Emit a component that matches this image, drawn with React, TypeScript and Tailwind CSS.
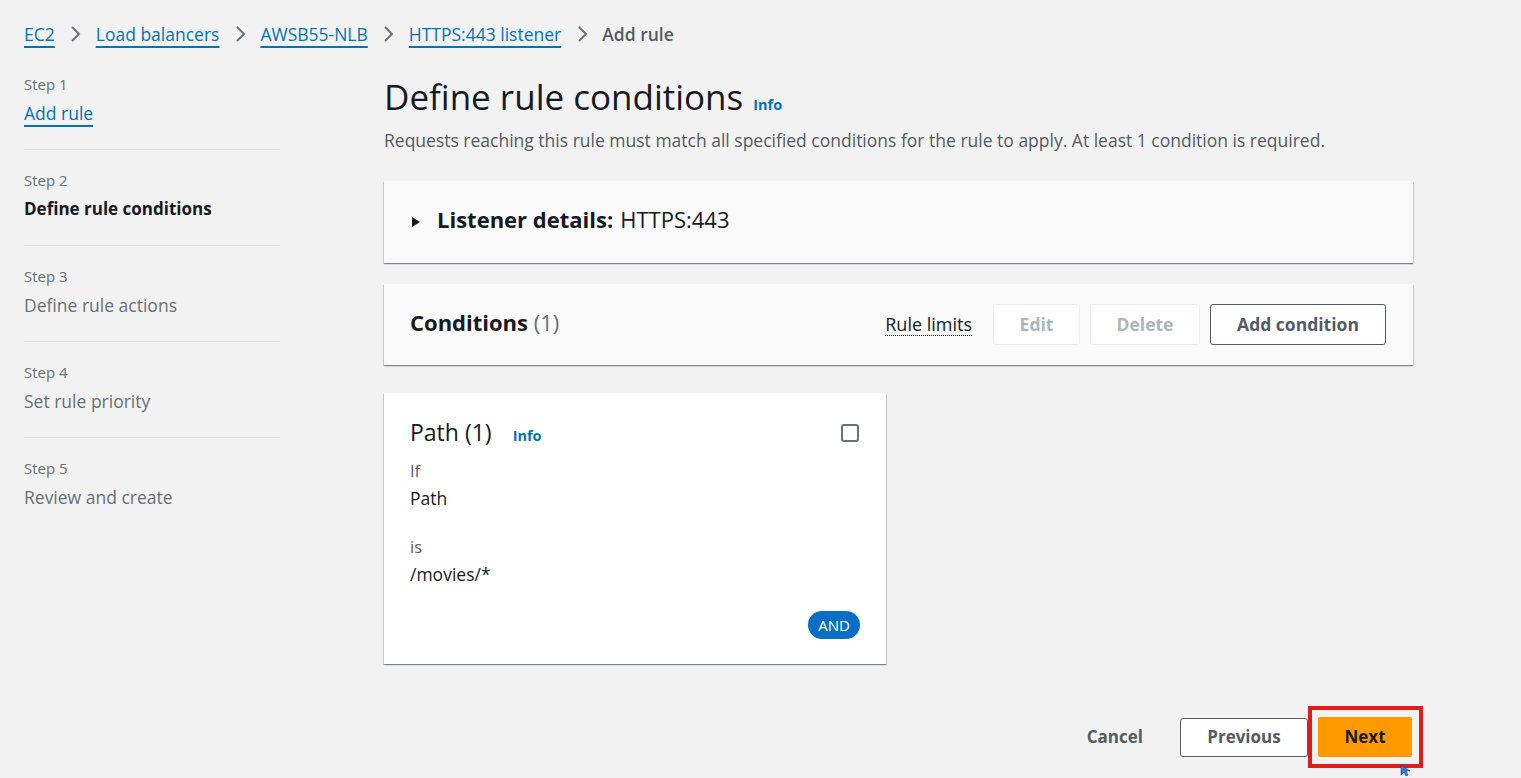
import React from 'react';

const font = { fontFamily: '"Open Sans", "Noto Sans", sans-serif' };

const crumbs = ['EC2', 'Load balancers', 'AWSB55-NLB', 'HTTPS:443 listener'];

const steps = [
  { n: 1, title: 'Add rule', state: 'link' },
  { n: 2, title: 'Define rule conditions', state: 'active' },
  { n: 3, title: 'Define rule actions', state: 'todo' },
  { n: 4, title: 'Set rule priority', state: 'todo' },
  { n: 5, title: 'Review and create', state: 'todo' },
];

function Chevron() {
  return (
    <svg width="12" height="18" viewBox="0 0 12 18" className="mx-[14.5px]">
      <path d="M3 2l7 7-7 7" fill="none" stroke="#687078" strokeWidth="2" />
    </svg>
  );
}

const cardShadow =
  'shadow-[0_1px_1px_0_rgba(0,28,36,0.35),1px_1px_1px_0_rgba(0,28,36,0.12),-1px_1px_1px_0_rgba(0,28,36,0.12)]';

export default function App() {
  return (
    <div className="min-h-screen w-full bg-[#f2f2f2] pt-[22px] text-[#16191f]" style={font}>
      {/* breadcrumb */}
      <nav className="flex h-[24px] items-center pl-[24px] text-[17.5px]">
        {crumbs.map((c) => (
          <React.Fragment key={c}>
            <a className="text-[#0073bb] underline decoration-[1.5px] underline-offset-[5px]">{c}</a>
            <Chevron />
          </React.Fragment>
        ))}
        <span className="font-semibold text-[#545b64]">Add rule</span>
      </nav>

      <div className="mt-[26px] flex">
        {/* steps */}
        <aside className="ml-[24px] w-[256px]">
          {steps.map((s, i) => (
            <div
              key={s.n}
              className={`${i > 0 ? 'border-t border-[#dcdddd] pt-[19px]' : 'pt-[1px]'} pb-[23px]`}
            >
              <div className="h-[22px] text-[15px] leading-[22px] text-[#687078]">Step {s.n}</div>
              <div
                className={`mt-[5px] h-[26px] leading-[26px] ${
                  s.state === 'link'
                    ? 'text-[17.5px] text-[#0073bb] underline decoration-[1.5px] underline-offset-[5px]'
                    : s.state === 'active'
                    ? 'text-[17px] font-bold text-[#16191f]'
                    : 'text-[17.5px] text-[#687078]'
                }`}
              >
                {s.title}
              </div>
            </div>
          ))}
        </aside>

        {/* main */}
        <main className="ml-[104px] w-[1029px]">
          <div className="mt-[5px] flex items-baseline">
            <h1 className="text-[35px] leading-[40px] font-normal">Define rule conditions</h1>
            <span className="ml-[10px] text-[14.5px] font-bold text-[#0073bb]">Info</span>
          </div>
          <p className="mt-[12px] text-[17.5px] leading-[22px] text-[#545b64]">
            Requests reaching this rule must match all specified conditions for the rule to apply. At least 1
            condition is required.
          </p>

          <section className={`mt-[30px] flex h-[82px] items-center bg-[#fafafa] pl-[27px] ${cardShadow}`}>
            <svg width="10" height="12" viewBox="0 0 10 12" className="mr-[16px]">
              <path d="M1 1l8 5-8 5z" fill="#16191f" />
            </svg>
            <div className="-mt-[6px]">
              <span className="text-[22px] font-bold">Listener details:</span>
              <span className="ml-[7px] text-[22px]">HTTPS:443</span>
            </div>
          </section>

          <section
            className={`mt-[21px] flex h-[81px] items-center justify-between bg-[#fafafa] pl-[26px] pr-[27px] ${cardShadow}`}
          >
            <div className="-mt-[4px] text-[22px]">
              <span className="font-bold">Conditions</span>{' '}
              <span className="text-[#687078]">(1)</span>
            </div>
            <div className="flex items-center">
              <span className="mr-[21px] border-b border-dotted border-[#16191f] text-[18px] leading-[22px]">
                Rule limits
              </span>
              <button className="h-[41px] w-[87px] rounded-[3px] border border-[#eaeded] bg-white text-[17.5px] font-bold text-[#aab7b8]">
                Edit
              </button>
              <button className="ml-[10px] h-[41px] w-[110px] rounded-[3px] border border-[#eaeded] bg-white text-[17.5px] font-bold text-[#aab7b8]">
                Delete
              </button>
              <button className="ml-[10px] h-[41px] w-[176px] rounded-[3px] border border-[#545b64] bg-white text-[17.5px] font-bold text-[#545b64]">
                Add condition
              </button>
            </div>
          </section>

          <section className={`mt-[28px] flex h-[271px] w-[502px] flex-col bg-white px-[26px] pt-[26px] ${cardShadow}`}>
            <div className="flex items-center justify-between">
              <div className="flex items-baseline">
                <span className="text-[23px] leading-[26px]">Path (1)</span>
                <span className="ml-[21px] text-[14.5px] font-bold text-[#0073bb]">Info</span>
              </div>
              <div className="mr-[1px] h-[18px] w-[18px] rounded-[3px] border-2 border-[#687078]" />
            </div>
            <div className="mt-[13px] text-[16.5px] leading-[22px] text-[#545b64]">If</div>
            <div className="mt-[5px] text-[17.5px] leading-[22px]">Path</div>
            <div className="mt-[27px] text-[16.5px] leading-[22px] text-[#545b64]">is</div>
            <div className="mt-[5px] text-[17.5px] leading-[22px]">/movies/*</div>
            <div className="mt-auto mb-[25px] flex justify-end">
              <span className="flex h-[28px] w-[52px] items-center justify-center rounded-full bg-[#0a6ec4] text-[15px] text-white">
                AND
              </span>
            </div>
          </section>

          <div className="mt-[53px] flex items-center justify-end pr-[1px]">
            <button className="mr-[37px] text-[17px] font-bold text-[#545b64]">Cancel</button>
            <button className="h-[39px] w-[128px] rounded-[3px] border border-[#545b64] bg-white text-[17px] font-bold text-[#545b64]">
              Previous
            </button>
            <div className="relative ml-[10px]">
              <button className="h-[40px] w-[94px] rounded-[2px] bg-[#ff9900] text-[17px] font-bold text-[#16191f]">
                Next
              </button>
              <span className="pointer-events-none absolute -top-[11px] -bottom-[11px] -left-[10px] -right-[11px] border-4 border-[#e21b1b]" />
              <svg width="10" height="12" viewBox="0 0 10 12" className="absolute left-[82px] top-[48px]">
                <path d="M1 0v10l3-3 2 4 2-1-2-4h4z" fill="#2b7fd6" stroke="#0b4a8f" strokeWidth="0.6" />
              </svg>
            </div>
          </div>
        </main>
      </div>
    </div>
  );
}
